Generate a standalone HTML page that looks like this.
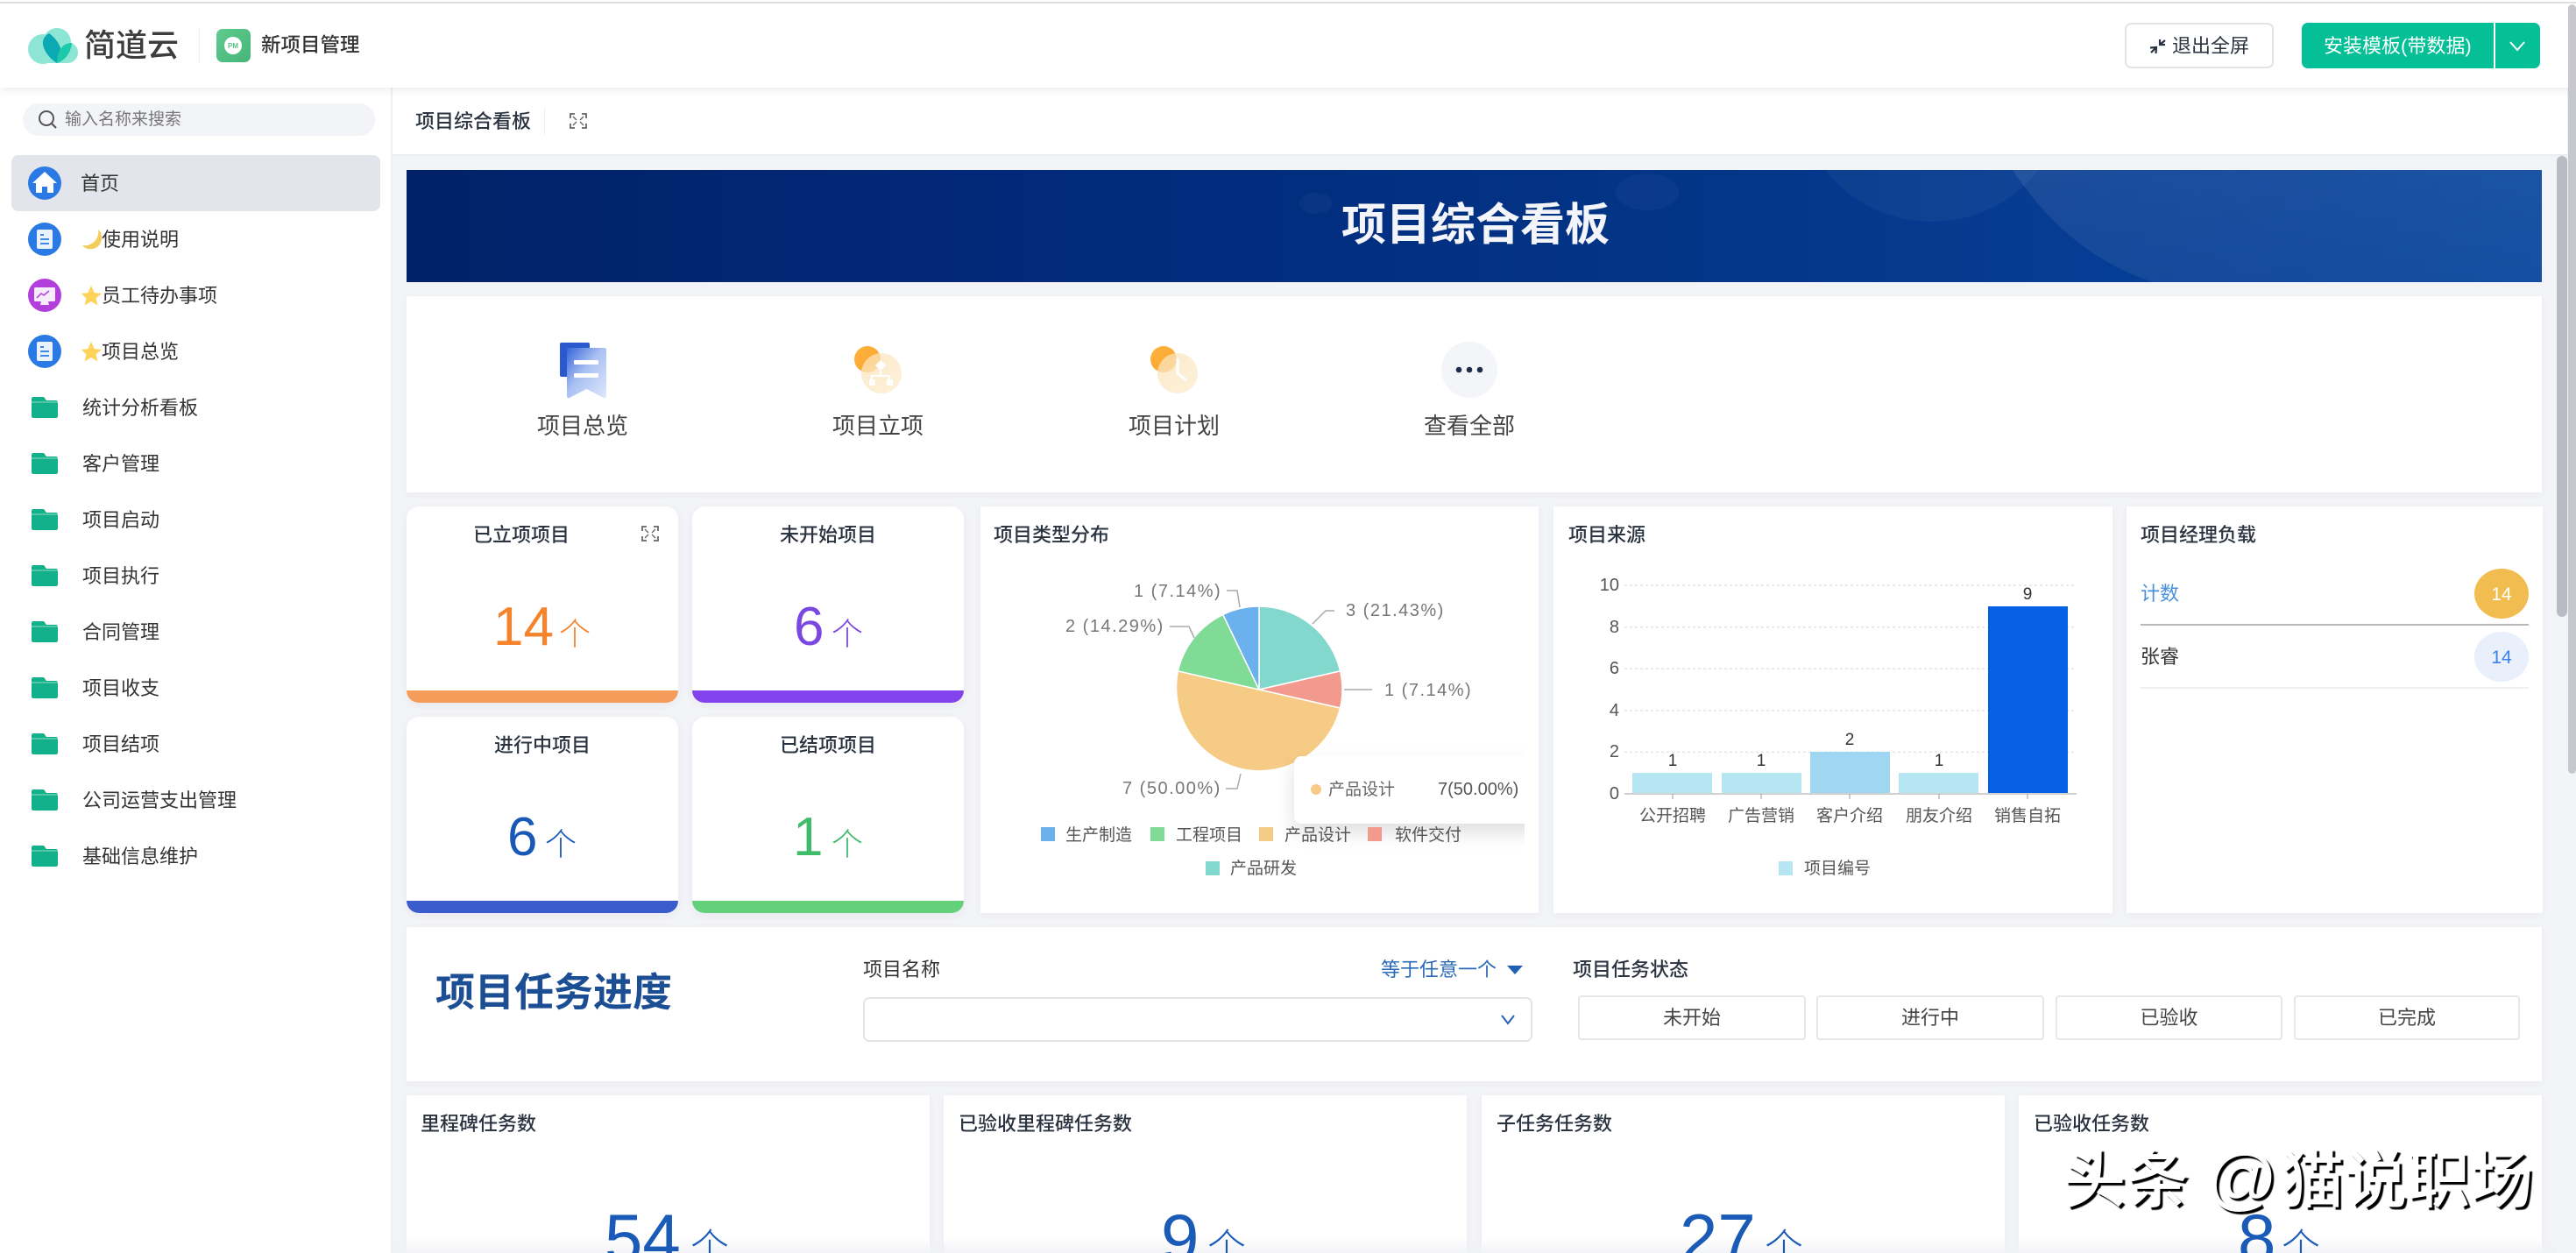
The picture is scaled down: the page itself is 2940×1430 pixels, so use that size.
<!DOCTYPE html>
<html lang="zh">
<head>
<meta charset="utf-8">
<title>项目综合看板</title>
<style>
html,body{margin:0;padding:0;width:2940px;height:1430px;overflow:hidden;background:#f3f4f8}
body{position:relative;font-family:"Liberation Sans","Noto Sans CJK SC",sans-serif;color:#333}
.a{position:absolute;box-sizing:border-box}
.t{position:absolute;line-height:1;white-space:nowrap}
.c{text-align:center}
.m{font-weight:500;color:#2b3340}
.card{position:absolute;box-sizing:border-box;background:#fff;box-shadow:0 2px 8px rgba(40,50,90,.05)}
.kpi{position:absolute;box-sizing:border-box;background:#fff;border-radius:14px;overflow:hidden;box-shadow:0 3px 10px rgba(40,50,90,.06);width:310px;height:224px}
.kpi i{position:absolute;left:0;right:0;bottom:0;height:14px;display:block}
.n{font-family:"Liberation Sans",sans-serif}
.g{font-size:36px;font-family:"Noto Sans CJK SC",sans-serif;font-weight:300}
.nav{font-size:22px;color:#333}
.btn{position:absolute;box-sizing:border-box;border:2px solid #e6e7ea;border-radius:4px;top:1136px;height:51px;background:#fff}
.wm{font-size:72px;color:#fff;font-weight:500;text-shadow:3px 3px 1px #000;top:1312px}
svg{position:absolute;left:0;top:0;overflow:visible}
svg text{font-family:"Liberation Sans","Noto Sans CJK SC",sans-serif}
</style>
</head>
<body>

<!-- sidebar -->
<div class="a" style="left:0;top:100px;width:448px;height:1330px;background:#fff;border-right:2px solid #eeeff2"></div>

<!-- content header -->
<div class="a" style="left:448px;top:100px;width:2482px;height:78px;background:#fff;border-bottom:2px solid #ebecef"></div>
<div class="t m" style="left:474px;top:128px;font-size:22px">项目综合看板</div>
<div class="a" style="left:621px;top:122px;width:1px;height:32px;background:#eee"></div>

<!-- top header -->
<div class="a" style="left:0;top:0;width:2940px;height:100px;background:#fff;box-shadow:0 3px 10px rgba(0,0,0,.07)"></div>
<div class="a" style="left:0;top:2px;width:2940px;height:2px;background:#e0e0e0"></div>
<div class="t" style="left:96px;top:34px;font-size:36px;color:#3d3d3d;font-weight:500">简道云</div>
<div class="a" style="left:227px;top:32px;width:1px;height:40px;background:#efefef"></div>
<div class="a" style="left:247px;top:33px;width:39px;height:38px;border-radius:7px;background:linear-gradient(135deg,#5fcb8d,#46b579)"></div>
<div class="t" style="left:298px;top:41px;font-size:22.500px;font-weight:500;color:#333">新项目管理</div>

<div class="a" style="left:2425px;top:26px;width:170px;height:52px;border:2px solid #e2e3e6;border-radius:7px;background:#fff"></div>
<div class="t" style="left:2479px;top:42px;font-size:22px;color:#2b3340">退出全屏</div>
<div class="a" style="left:2627px;top:26px;width:219px;height:52px;border-radius:7px 0 0 7px;background:#05c097"></div>
<div class="a" style="left:2848px;top:26px;width:51px;height:52px;border-radius:0 7px 7px 0;background:#05c097"></div>
<div class="t" style="left:2652px;top:42px;font-size:22px;color:#fff">安装模板(带数据)</div>

<!-- outer scrollbar -->
<div class="a" style="left:2931px;top:5px;width:9px;height:878px;background:#c6c8ce;border-radius:5px"></div>
<div class="a" style="left:2918px;top:178px;width:12px;height:526px;background:#b9bbc2;border-radius:6px"></div>

<!-- search -->
<div class="a" style="left:26px;top:118px;width:402px;height:37px;border-radius:19px;background:#f3f4f7"></div>
<div class="t" style="left:74px;top:127px;font-size:19px;color:#777">输入名称来搜索</div>

<!-- active nav -->
<div class="a" style="left:13px;top:177px;width:421px;height:64px;border-radius:8px;background:#e3e5ec"></div>
<div class="t nav" style="left:92px;top:199px">首页</div>
<div class="t nav" style="left:116px;top:263px">使用说明</div>
<div class="t nav" style="left:116px;top:327px">员工待办事项</div>
<div class="t nav" style="left:116px;top:391px">项目总览</div>
<div class="t nav" style="left:94px;top:455px">统计分析看板</div>
<div class="t nav" style="left:94px;top:519px">客户管理</div>
<div class="t nav" style="left:94px;top:583px">项目启动</div>
<div class="t nav" style="left:94px;top:647px">项目执行</div>
<div class="t nav" style="left:94px;top:711px">合同管理</div>
<div class="t nav" style="left:94px;top:775px">项目收支</div>
<div class="t nav" style="left:94px;top:839px">项目结项</div>
<div class="t nav" style="left:94px;top:903px">公司运营支出管理</div>
<div class="t nav" style="left:94px;top:967px">基础信息维护</div>

<!-- banner -->
<div class="a" style="left:464px;top:194px;width:2437px;height:128px;background:linear-gradient(90deg,#012268 0%,#02297a 30%,#033587 60%,#063d94 80%,#0b479f 100%);overflow:hidden"></div>

<!-- quick links card -->
<div class="card" style="left:464px;top:338px;width:2437px;height:224px"></div>
<div class="t c" style="left:605px;width:120px;top:473px;font-size:26px;color:#444">项目总览</div>
<div class="t c" style="left:942px;width:120px;top:473px;font-size:26px;color:#444">项目立项</div>
<div class="t c" style="left:1280px;width:120px;top:473px;font-size:26px;color:#444">项目计划</div>
<div class="t c" style="left:1617px;width:120px;top:473px;font-size:26px;color:#444">查看全部</div>

<!-- KPI cards -->
<div class="kpi" style="left:464px;top:578px"><i style="background:#f59c5a"></i></div>
<div class="kpi" style="left:790px;top:578px"><i style="background:#8243ec"></i></div>
<div class="kpi" style="left:464px;top:818px"><i style="background:#3a5ccc"></i></div>
<div class="kpi" style="left:790px;top:818px"><i style="background:#65d07a"></i></div>

<div class="t c m" style="left:440px;width:310px;top:600px;font-size:22px">已立项项目</div>
<div class="t c m" style="left:790px;width:310px;top:600px;font-size:22px">未开始项目</div>
<div class="t c m" style="left:464px;width:310px;top:840px;font-size:22px">进行中项目</div>
<div class="t c m" style="left:790px;width:310px;top:840px;font-size:22px">已结项项目</div>

<div class="t n" style="left:563px;top:685px;font-size:62px;color:#f4832b">14</div>
<div class="t g" style="left:638px;top:703px;color:#f4832b">个</div>
<div class="t n" style="left:906px;top:685px;font-size:62px;color:#7a47e0">6</div>
<div class="t g" style="left:949px;top:703px;color:#7a47e0">个</div>
<div class="t n" style="left:579px;top:925px;font-size:62px;color:#1a58b8">6</div>
<div class="t g" style="left:622px;top:943px;color:#1a58b8">个</div>
<div class="t n" style="left:905px;top:925px;font-size:62px;color:#3fbb6a">1</div>
<div class="t g" style="left:949px;top:943px;color:#3fbb6a">个</div>

<!-- chart cards -->
<div class="card" style="left:1119px;top:578px;width:637px;height:464px"></div>
<div class="card" style="left:1773px;top:578px;width:638px;height:464px"></div>
<div class="card" style="left:2427px;top:578px;width:475px;height:464px"></div>
<div class="t m" style="left:1134px;top:600px;font-size:22px">项目类型分布</div>
<div class="t m" style="left:1790px;top:600px;font-size:22px">项目来源</div>
<div class="t m" style="left:2443px;top:600px;font-size:22px">项目经理负载</div>

<!-- pie + bar + icons -->
<svg width="2940" height="1430" viewBox="0 0 2940 1430">
  <defs>
    <linearGradient id="bk" x1="0" y1="0" x2="1" y2="1">
      <stop offset="0" stop-color="#3565d8"/><stop offset=".45" stop-color="#a9c0f2"/><stop offset="1" stop-color="#dfe8fb"/>
    </linearGradient>
    <linearGradient id="or" x1="0" y1="0" x2="1" y2="1">
      <stop offset="0" stop-color="#ffb33e"/><stop offset="1" stop-color="#f9a32d"/>
    </linearGradient>
    <linearGradient id="cr" x1="0" y1="0" x2="1" y2="1">
      <stop offset="0" stop-color="#fbe3b6" stop-opacity=".75"/><stop offset="1" stop-color="#fdf0d8"/>
    </linearGradient>
    <linearGradient id="arc" x1="0" y1="0" x2="1" y2="1">
      <stop offset="0" stop-color="#fff" stop-opacity=".09"/><stop offset="1" stop-color="#fff" stop-opacity=".04"/>
    </linearGradient>
    <clipPath id="bn"><rect x="464" y="194" width="2437" height="128"/></clipPath>
  </defs>

  <!-- banner decoration -->
  <g clip-path="url(#bn)">
    <ellipse cx="2205" cy="110" rx="150" ry="143" fill="#fff" opacity=".045"/>
    <path d="M2297 194Q2360 290 2457 322L2901 322L2901 194Z" fill="url(#arc)"/>
    <ellipse cx="1880" cy="219" rx="36" ry="21" fill="#fff" opacity=".03"/>
    <ellipse cx="1502" cy="232" rx="19" ry="12" fill="#fff" opacity=".03"/>
  </g>
  <text x="1531" y="274" font-size="51" font-weight="700" fill="#f3f5fa">项目综合看板</text>

  <!-- logo -->
  <g>
    <circle cx="49" cy="56" r="17" fill="#8de5d6"/>
    <circle cx="65" cy="48" r="16" fill="#8de5d6"/>
    <circle cx="77" cy="60" r="12" fill="#8de5d6"/>
    <rect x="49" y="54" width="28" height="18" fill="#8de5d6"/>
    <path d="M65 72C55 66 48 55 49 47C50 42 53 40 56 38C63 43 70 52 70 60C70 65 67 69 65 72Z" fill="#0aa9b4"/>
    <path d="M65 72C72 70 81 62 82 49C75 49 70 53 68 58C66 62 65 67 65 72Z" fill="#1cc9a8"/>
    <circle cx="266" cy="52" r="10" fill="#fff"/>
    <text x="266" y="55" font-size="8" fill="#56c184" text-anchor="middle" font-weight="700">PM</text>
  </g>

  <!-- exit fullscreen icon -->
  <path d="M2455 60L2461 54M2454 54.500L2461 54L2460.500 61M2471 46L2465 51M2465 45L2465 51L2471 51" fill="none" stroke="#2b3340" stroke-width="2.200"/>
  <!-- install chevron -->
  <path d="M2865 48L2873 57L2881 48" fill="none" stroke="#fff" stroke-width="2"/>

  <!-- search -->
  <circle cx="53" cy="135" r="8" fill="none" stroke="#555" stroke-width="2"/>
  <path d="M59 141L64 146" stroke="#555" stroke-width="2.200"/>

  <!-- nav icons -->
  <circle cx="51" cy="209" r="19" fill="#2b79e4"/>
  <path d="M51 196L65 209L61 209L61 220L54 220L54 213L48 213L48 220L41 220L41 209L37 209Z" fill="#fff"/>
  <circle cx="51" cy="273" r="19" fill="#2b79e4"/>
  <rect x="42" y="262" width="18" height="22" rx="2" fill="#eaf2fe"/>
  <path d="M46 268H50M46 273H56M46 278H56" stroke="#2b79e4" stroke-width="1.800"/>
  <path d="M112 262C114 272 105 282 94 280C99 287 115 286 116 272C116 268 115 264 112 262Z" fill="#f4cc5c"/>
  <circle cx="51" cy="337" r="19" fill="#b23fdc"/>
  <rect x="39" y="328" width="24" height="16" rx="1.500" fill="#f6ecfb"/>
  <path d="M42 340L47 335L50 337L56 332" fill="none" stroke="#b23fdc" stroke-width="1.500"/>
  <path d="M47 344H55L56 348H46Z" fill="#f6ecfb"/>
  <path d="M104 326L107.500 334L116 335L109.500 340.500L111.500 348.500L104 344L96.500 348.500L98.500 340.500L93 335L100.500 334Z" fill="#fdd35a"/>
  <circle cx="51" cy="401" r="19" fill="#2b79e4"/>
  <rect x="42" y="390" width="18" height="22" rx="2" fill="#eaf2fe"/>
  <path d="M46 396H50M46 401H56M46 406H56" stroke="#2b79e4" stroke-width="1.800"/>
  <path d="M104 390L107.500 398L116 399L109.500 404.500L111.500 412.500L104 408L96.500 412.500L98.500 404.500L93 399L100.500 398Z" fill="#fdd35a"/>
  <g fill="#12b18b">
    <path d="M38 453H50L53 457H64C65 457 66 458 66 459V475C66 476 65 477 64 477H38C37 477 36 476 36 475V455C36 454 37 453 38 453Z"/>
    <path d="M38 517H50L53 521H64C65 521 66 522 66 523V539C66 540 65 541 64 541H38C37 541 36 540 36 539V519C36 518 37 517 38 517Z"/>
    <path d="M38 581H50L53 585H64C65 585 66 586 66 587V603C66 604 65 605 64 605H38C37 605 36 604 36 603V583C36 582 37 581 38 581Z"/>
    <path d="M38 645H50L53 649H64C65 649 66 650 66 651V667C66 668 65 669 64 669H38C37 669 36 668 36 667V647C36 646 37 645 38 645Z"/>
    <path d="M38 709H50L53 713H64C65 713 66 714 66 715V731C66 732 65 733 64 733H38C37 733 36 732 36 731V711C36 710 37 709 38 709Z"/>
    <path d="M38 773H50L53 777H64C65 777 66 778 66 779V795C66 796 65 797 64 797H38C37 797 36 796 36 795V775C36 774 37 773 38 773Z"/>
    <path d="M38 837H50L53 841H64C65 841 66 842 66 843V859C66 860 65 861 64 861H38C37 861 36 860 36 859V839C36 838 37 837 38 837Z"/>
    <path d="M38 901H50L53 905H64C65 905 66 906 66 907V923C66 924 65 925 64 925H38C37 925 36 924 36 923V903C36 902 37 901 38 901Z"/>
    <path d="M38 965H50L53 969H64C65 969 66 970 66 971V987C66 988 65 989 64 989H38C37 989 36 988 36 987V967C36 966 37 965 38 965Z"/>
  </g>
  <g stroke="#fff" stroke-width="1" opacity=".55">
    <path d="M36 459H66M36 523H66M36 587H66M36 651H66M36 715H66M36 779H66M36 843H66M36 907H66M36 971H66"/>
  </g>

  <!-- expand icons -->
  <g fill="none" stroke="#666" stroke-width="1.800">
    <path d="M651 135V130H656M664 130H669V135M669 141V146H664M656 146H651V141"/>
    <path d="M654 133L658 137M666 133L662 137M666 143L662 139M654 143L658 139" stroke-width="1.300"/>
    <path d="M733 606V601H738M746 601H751V606M751 612V617H746M738 617H733V612"/>
    <path d="M736 604L740 608M748 604L744 608M748 614L744 610M736 614L740 610" stroke-width="1.300"/>
  </g>

  <!-- quick link icons -->
  <rect x="639" y="391" width="34" height="39" rx="2" fill="#2a58cf"/>
  <path d="M649 397H690C691 397 692 398 692 399V452C692 454 690 455 689 454L669.500 444L650 454C649 455 647 454 647 452V399C647 398 648 397 649 397Z" fill="url(#bk)"/>
  <rect x="655" y="411" width="28" height="5" rx="1" fill="#fff"/>
  <rect x="655" y="426" width="28" height="5" rx="1" fill="#fff"/>

  <circle cx="990" cy="410" r="15" fill="url(#or)"/>
  <circle cx="1006" cy="426" r="23" fill="url(#cr)" opacity=".92"/>
  <path d="M1005 411L1011 417L1005 423L999 417Z" fill="#fff"/>
  <path d="M995 434V429H1015V434M1005 423V429" fill="none" stroke="#fff" stroke-width="2"/>
  <rect x="992" y="433" width="7" height="7" fill="#fff"/><rect x="1012" y="433" width="7" height="7" fill="#fff"/>

  <circle cx="1328" cy="410" r="15" fill="url(#or)"/>
  <circle cx="1344" cy="426" r="23" fill="url(#cr)" opacity=".92"/>
  <path d="M1344 409V426L1354 434" fill="none" stroke="#fff" stroke-width="3"/>

  <circle cx="1677" cy="422" r="32" fill="#f3f5f9"/>
  <circle cx="1665" cy="422" r="3.300" fill="#1f2d4a"/><circle cx="1677" cy="422" r="3.300" fill="#1f2d4a"/><circle cx="1689" cy="422" r="3.300" fill="#1f2d4a"/>

  <!-- pie -->
  <g stroke="#fff" stroke-width="1.500">
    <path d="M1437 787L1437 692A95 95 0 0 1 1529.600 765.900Z" fill="#83d8cd"/>
    <path d="M1437 787L1529.600 765.900A95 95 0 0 1 1529.600 808.100Z" fill="#f39a8f"/>
    <path d="M1437 787L1529.600 808.100A95 95 0 0 1 1344.400 765.900Z" fill="#f6cb85"/>
    <path d="M1437 787L1344.400 765.900A95 95 0 0 1 1395.800 701.400Z" fill="#80db97"/>
    <path d="M1437 787L1395.800 701.400A95 95 0 0 1 1437 692Z" fill="#6ab1ee"/>
  </g>
  <g fill="none" stroke="#aaa" stroke-width="1.500">
    <path d="M1400 674H1412L1415 693"/>
    <path d="M1335 715H1357L1363 728"/>
    <path d="M1523 697H1513L1498 712"/>
    <path d="M1534 787H1566"/>
    <path d="M1399 900H1412L1416 883"/>
  </g>
  <g font-size="20" fill="#777" letter-spacing="1.500">
    <text x="1294" y="681">1 (7.14%)</text>
    <text x="1216" y="721">2 (14.29%)</text>
    <text x="1536" y="703">3 (21.43%)</text>
    <text x="1580" y="794">1 (7.14%)</text>
    <text x="1281" y="906">7 (50.00%)</text>
  </g>

  <!-- bar chart -->
  <g stroke="#e3e3e3" stroke-width="1.500" stroke-dasharray="3 3">
    <path d="M1854 668H2370M1854 715.600H2370M1854 763.200H2370M1854 811H2370M1854 858.400H2370"/>
  </g>
  <rect x="1863" y="882" width="91" height="24" fill="#b5e6f2"/>
  <rect x="1965" y="882" width="91" height="24" fill="#b5e6f2"/>
  <rect x="2066" y="858" width="91" height="48" fill="#9fd7f2"/>
  <rect x="2167" y="882" width="91" height="24" fill="#b5e6f2"/>
  <rect x="2269" y="692" width="91" height="214" fill="#0560e6"/>
  <path d="M1854 906H2370" stroke="#d0d0d0" stroke-width="2"/>
  <path d="M1909 906V912M2010 906V912M2111 906V912M2213 906V912M2314 906V912" stroke="#aaa" stroke-width="1.200"/>
  <g font-size="20" fill="#555" text-anchor="end">
    <text x="1848" y="674">10</text><text x="1848" y="722">8</text><text x="1848" y="769">6</text>
    <text x="1848" y="817">4</text><text x="1848" y="864">2</text><text x="1848" y="912">0</text>
  </g>
  <g font-size="19" fill="#333" text-anchor="middle">
    <text x="1909" y="874">1</text><text x="2010" y="874">1</text><text x="2111" y="850">2</text>
    <text x="2213" y="874">1</text><text x="2314" y="684">9</text>
  </g>
  <g font-size="19" fill="#555" text-anchor="middle">
    <text x="1909" y="937">公开招聘</text><text x="2010" y="937">广告营销</text><text x="2111" y="937">客户介绍</text>
    <text x="2213" y="937">朋友介绍</text><text x="2314" y="937">销售自拓</text>
  </g>
  <rect x="2030" y="983" width="16" height="16" fill="#b5e6f2"/>
  <text x="2059" y="997" font-size="19" fill="#555">项目编号</text>
</svg>

<!-- tooltip -->
<div class="a" style="left:1119px;top:578px;width:621px;height:464px;overflow:hidden">
  <div class="a" style="left:358px;top:285px;width:300px;height:77px;background:#fff;border-radius:8px;box-shadow:0 10px 22px rgba(0,0,0,.13)"></div>
</div>
<div class="a" style="left:1496px;top:895px;width:12px;height:12px;border-radius:50%;background:#f6cb85"></div>
<div class="t" style="left:1516px;top:892px;font-size:19px;color:#666">产品设计</div>
<div class="t" style="left:1641px;top:891px;font-size:20px;color:#555">7(50.00%)</div>

<!-- pie legend -->
<svg width="2940" height="1430" viewBox="0 0 2940 1430">
  <rect x="1188" y="944" width="16" height="16" fill="#6ab1ee"/>
  <rect x="1313" y="944" width="16" height="16" fill="#80db97"/>
  <rect x="1437" y="944" width="16" height="16" fill="#f6cb85"/>
  <rect x="1561" y="944" width="16" height="16" fill="#f39a8f"/>
  <rect x="1376" y="983" width="16" height="16" fill="#83d8cd"/>
  <g font-size="19" fill="#555">
    <text x="1216" y="959">生产制造</text><text x="1342" y="959">工程项目</text>
    <text x="1466" y="959">产品设计</text><text x="1592" y="959">软件交付</text>
    <text x="1404" y="997">产品研发</text>
  </g>
</svg>

<!-- manager load -->
<div class="t" style="left:2443px;top:667px;font-size:22px;color:#4a90d9">计数</div>
<div class="a" style="left:2824px;top:649px;width:62px;height:57px;border-radius:50%;background:#f2bd50"></div>
<div class="t c n" style="left:2824px;width:62px;top:668px;font-size:21px;color:#fff">14</div>
<div class="a" style="left:2443px;top:712px;width:443px;height:2px;background:#b8b8b8"></div>
<div class="t" style="left:2443px;top:739px;font-size:22px;color:#333">张睿</div>
<div class="a" style="left:2824px;top:721px;width:62px;height:57px;border-radius:50%;background:#e9f0fb"></div>
<div class="t c n" style="left:2824px;width:62px;top:740px;font-size:21px;color:#3b82e6">14</div>
<div class="a" style="left:2443px;top:784px;width:443px;height:2px;background:#eeeff1"></div>

<!-- filter section -->
<div class="card" style="left:464px;top:1058px;width:2437px;height:176px"></div>
<div class="t" style="left:497px;top:1110px;font-size:45px;font-weight:700;color:#1c4e94">项目任务进度</div>
<div class="t" style="left:985px;top:1096px;font-size:22px;color:#333">项目名称</div>
<div class="t" style="left:1576px;top:1096px;font-size:22px;color:#2a6ab9">等于任意一个</div>
<div class="a" style="left:1720px;top:1102px;width:0;height:0;border-left:9px solid transparent;border-right:9px solid transparent;border-top:10px solid #1f60b4"></div>
<div class="a" style="left:985px;top:1138px;width:764px;height:51px;border:2px solid #e4e5e8;border-radius:7px;background:#fff"></div>
<svg width="2940" height="1430" viewBox="0 0 2940 1430"><path d="M1714 1159L1721 1168L1728 1159" fill="none" stroke="#1f60b4" stroke-width="2"/></svg>
<div class="t m" style="left:1795px;top:1096px;font-size:22px">项目任务状态</div>
<div class="btn" style="left:1801px;width:260px"></div>
<div class="btn" style="left:2073px;width:260px"></div>
<div class="btn" style="left:2346px;width:259px"></div>
<div class="btn" style="left:2618px;width:258px"></div>
<div class="t c" style="left:1801px;width:260px;top:1151px;font-size:22px;color:#444">未开始</div>
<div class="t c" style="left:2073px;width:260px;top:1151px;font-size:22px;color:#444">进行中</div>
<div class="t c" style="left:2346px;width:259px;top:1151px;font-size:22px;color:#444">已验收</div>
<div class="t c" style="left:2618px;width:258px;top:1151px;font-size:22px;color:#444">已完成</div>

<!-- bottom cards -->
<div class="card" style="left:464px;top:1250px;width:597px;height:180px"></div>
<div class="card" style="left:1077px;top:1250px;width:597px;height:180px"></div>
<div class="card" style="left:1691px;top:1250px;width:597px;height:180px"></div>
<div class="card" style="left:2304px;top:1250px;width:597px;height:180px"></div>
<div class="a" style="left:448px;top:1412px;width:2470px;height:18px;background:linear-gradient(180deg,rgba(240,241,245,0),rgba(240,241,245,.85))"></div>
<div class="t m" style="left:480px;top:1272px;font-size:22px">里程碑任务数</div>
<div class="t m" style="left:1094px;top:1272px;font-size:22px">已验收里程碑任务数</div>
<div class="t m" style="left:1708px;top:1272px;font-size:22px">子任务任务数</div>
<div class="t m" style="left:2321px;top:1272px;font-size:22px">已验收任务数</div>
<div class="t n" style="left:690px;top:1374px;font-size:78px;color:#1a5bb8">54</div>
<div class="t g" style="left:788px;top:1398px;font-size:44px;color:#1a5bb8">个</div>
<div class="t n" style="left:1325px;top:1374px;font-size:78px;color:#1a5bb8">9</div>
<div class="t g" style="left:1378px;top:1398px;font-size:44px;color:#1a5bb8">个</div>
<div class="t n" style="left:1917px;top:1374px;font-size:78px;color:#1a5bb8">27</div>
<div class="t g" style="left:2014px;top:1398px;font-size:44px;color:#1a5bb8">个</div>
<div class="t n" style="left:2554px;top:1374px;font-size:78px;color:#1a5bb8">8</div>
<div class="t g" style="left:2604px;top:1398px;font-size:44px;color:#1a5bb8">个</div>

<!-- watermark -->
<div class="t wm" style="left:2354px">头条</div>
<div class="t wm" style="left:2518px;top:1305px;font-size:80px;font-weight:400">@</div>
<div class="t wm" style="left:2603px">猫说职场</div>

</body>
</html>
